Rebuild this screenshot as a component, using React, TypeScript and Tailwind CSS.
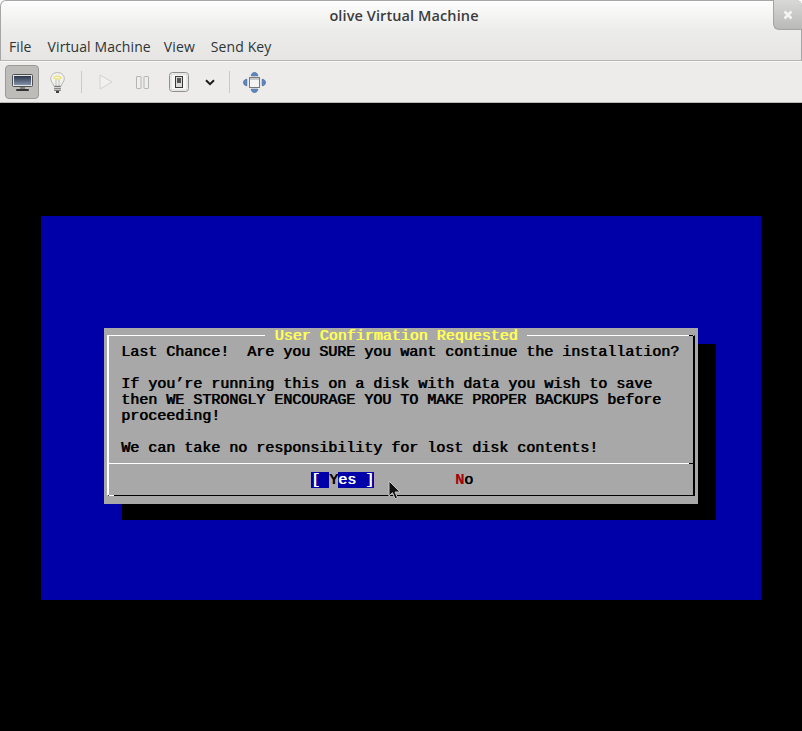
import React from "react";

// VGA glyphs have double-width vertical strokes, the shadow fakes that
const mono = "font-['Liberation_Mono',monospace] text-[15px] leading-4 whitespace-pre [text-shadow:0.7px_0_0_currentColor]";

const Line = ({ text }: { text: string }) => <div className="h-4">{text}</div>;

const MonitorIcon = () => (
  <svg width="21" height="17" viewBox="0 0 21 17">
    <defs>
      <linearGradient id="scr" x1="0" y1="0" x2="0" y2="1">
        <stop offset="0" stopColor="#2c3649" />
        <stop offset="1" stopColor="#8291aa" />
      </linearGradient>
    </defs>
    <rect x="0.500" y="0.500" width="20" height="12" rx="1" fill="#e4e4e2" stroke="#4d4f52" />
    <rect x="2" y="2" width="17" height="9" fill="url(#scr)" />
    <rect x="8" y="13" width="5" height="2" fill="#7d7d7b" />
    <rect x="4" y="15" width="13" height="2" rx="1" fill="#333" />
  </svg>
);

const BulbIcon = () => (
  <svg width="15" height="21" viewBox="0 0 15 21">
    <path d="M7.500.6C3.500.6.700 3.300.700 6.800c0 3 2.600 4.300 3.100 7.200h7.400c.5-2.900 3.100-4.200 3.100-7.200C14.300 3.300 11.500.6 7.500.6z" fill="#f2f2ef" stroke="#b5b5b1" />
    <path d="M3.800 5.800c1.400-2.200 6-2.200 7.400 0-.9 1.800-6.500 1.800-7.400 0z" fill="#fbf8d8" stroke="#ece07a" strokeWidth="1.300" />
    <path d="M6 7.500V14M9 7.500V14" stroke="#bcbcb7" />
    <rect x="4" y="14" width="7" height="5" rx="1" fill="#77787a" />
    <path d="M4 15.500h7M4 17.300h7" stroke="#d5d5d5" />
    <rect x="6" y="19" width="3" height="2" fill="#3f3f3f" />
  </svg>
);

const PlayIcon = () => (
  <svg width="14" height="16" viewBox="0 0 14 16">
    <path d="M1 1l12 7-12 7z" fill="#f1f1ef" stroke="#d2d2cf" />
  </svg>
);

const PauseIcon = () => (
  <svg width="13" height="13" viewBox="0 0 13 13">
    <rect x="0.500" y="0.500" width="4.500" height="12" rx="0.500" fill="#eeeeec" stroke="#b4b4b1" />
    <rect x="8" y="0.500" width="4.500" height="12" rx="0.500" fill="#eeeeec" stroke="#b4b4b1" />
  </svg>
);

const SwitchIcon = () => (
  <svg width="20" height="20" viewBox="0 0 20 20">
    <rect x="0.500" y="0.500" width="19" height="19" rx="3" fill="#f7f7f6" stroke="#8e8e8b" />
    <rect x="2" y="2" width="16" height="16" rx="2" fill="none" stroke="#d6d6d4" />
    <rect x="6.500" y="4.500" width="7" height="11" fill="#dcdcda" stroke="#3a3a3a" />
    <rect x="8" y="6" width="4" height="5" fill="#555" />
  </svg>
);

const ChevronIcon = () => (
  <svg width="10" height="7" viewBox="0 0 10 7">
    <path d="M1 1.200L5 5.200l4-4" fill="none" stroke="#1c1c1c" strokeWidth="2" />
  </svg>
);

const FullscreenIcon = () => (
  <svg width="23" height="21" viewBox="0 0 23 21">
    <g fill="#5f86c0" stroke="#3b659f" strokeWidth="0.700">
      <path d="M11.500.5c2 0 3.300 1.500 3.300 3.300h-6.600C8.200 2 9.500.5 11.500.5z" />
      <path d="M11.500 20.500c2 0 3.300-1.500 3.300-3.300H8.200c0 1.800 1.300 3.300 3.300 3.300z" />
      <path d="M.5 10.500c0-2 1.500-3.300 3.300-3.300v6.600C2 13.800.5 12.500.5 10.500z" />
      <path d="M22.500 10.500c0-2-1.500-3.300-3.300-3.300v6.600c1.800 0 3.300-1.300 3.300-3.300z" />
    </g>
    <rect x="6.500" y="5.500" width="10" height="10" fill="#f4f4f3" stroke="#77797b" />
    <rect x="7" y="6" width="9" height="2" fill="#c6c8ca" />
  </svg>
);

const CloseIcon = () => (
  <svg width="10" height="10" viewBox="0 0 10 10">
    <path d="M1.500 1.500l7 7M8.500 1.500l-7 7" stroke="#f4f4f4" strokeWidth="2.600" />
  </svg>
);

const Cursor = () => (
  <svg width="13" height="20" viewBox="0 0 13 20">
    <path d="M1 1v15l3.500-3.300 2.500 6 2.500-1-2.500-5.700H12z" fill="#111" stroke="#c8c8c8" />
  </svg>
);

export default function App() {
  return (
    <div className="w-[802px] h-[731px] flex flex-col bg-white overflow-hidden">
      <div className="relative h-[61px] rounded-t-md border border-[#a6a6a6] border-b-[#b5b5b2] bg-gradient-to-b from-[#fdfdfd] via-[#ececea] to-[#e6e5e3] font-['Open_Sans',sans-serif] text-[#2e3436]">
        <div className="h-7 flex items-center justify-center text-[14.500px] tracking-[0.1px] font-semibold text-[#3c3c3c] pt-0.5 pl-[6px]">olive Virtual Machine</div>
        <div className="flex gap-[14px] pl-[8px] pt-[8px] text-[14px] tracking-[0.1px] leading-5">
          <span className="mr-[2px]">File</span>
          <span className="-mr-px">Virtual Machine</span>
          <span className="mr-[2px]">View</span>
          <span>Send Key</span>
        </div>
        <div className="absolute -top-px -right-px w-[29px] h-[30px] rounded-bl-md rounded-tr-md border-l border-b border-[#a5a5a3] bg-gradient-to-b from-[#d9d9d8] to-[#b9b9b8] flex items-center justify-center">
          <CloseIcon />
        </div>
      </div>

      <div className="h-[42px] bg-[#edecea] border-t border-[#f8f8f7] border-b border-b-[#b8b8b5] flex items-center pl-[5px]">
        <div className="w-[34px] h-[34px] rounded-[4px] border border-[#9a9a97] bg-[#bdbcb8] flex items-center justify-center">
          <MonitorIcon />
        </div>
        <div className="ml-[11px] w-[15px] flex justify-center"><BulbIcon /></div>
        <div className="ml-[16px] w-px h-[22px] bg-[#c9c9c6]" />
        <div className="ml-[17px]"><PlayIcon /></div>
        <div className="ml-[23px]"><PauseIcon /></div>
        <div className="ml-[20px]"><SwitchIcon /></div>
        <div className="ml-[16px]"><ChevronIcon /></div>
        <div className="ml-[14px] w-px h-[22px] bg-[#c9c9c6]" />
        <div className="ml-[13px]"><FullscreenIcon /></div>
      </div>

      <div className="flex-1 bg-black pt-[113px] pl-[41px]">
        <div className="w-[720px] h-[384px] bg-[#0000a8] pt-[112px] pl-[63px]">
          <div className={`relative w-[594px] h-[176px] bg-[#a8a8a8] shadow-[18px_16px_0_#000] pt-[7px] px-[3px] text-black ${mono}`}>
            <div className="absolute z-10 top-px left-[161px] w-[262px] h-4 bg-[#a8a8a8] text-center text-[#ffff55]">User Confirmation Requested</div>
            <div className="relative h-[161px] border-t border-t-white border-l-2 border-l-white border-r-2 border-r-black border-b border-b-black">
              <span className="absolute -top-px right-0 w-1 h-px bg-black" />
              <span className="absolute -bottom-px left-0 w-[5px] h-px bg-white" />
              <div className="h-[127px] pt-[9px] pl-[12px]">
                <Line text="Last Chance!  Are you SURE you want continue the installation?" />
                <Line text="" />
                <Line text="If you’re running this on a disk with data you wish to save" />
                <Line text="then WE STRONGLY ENCOURAGE YOU TO MAKE PROPER BACKUPS before" />
                <Line text="proceeding!" />
                <Line text="" />
                <Line text="We can take no responsibility for lost disk contents!" />
              </div>
              <div className="flex h-px">
                <div className="flex-1 bg-white" />
                <div className="w-1 bg-black" />
              </div>
              <div className="flex pt-2 pl-[202px] leading-[17px]">
                <span className="h-4 bg-[#0000a8] text-white">[ </span>
                <span className="h-4">Y</span>
                <span className="h-4 bg-[#0000a8] text-white">es ]</span>
                <span className="h-4 ml-[81px] text-[#a80000]">N</span>
                <span className="h-4">o</span>
              </div>
              <div className="absolute left-[279px] top-[144px]"><Cursor /></div>
            </div>
          </div>
        </div>
      </div>
    </div>
  );
}
